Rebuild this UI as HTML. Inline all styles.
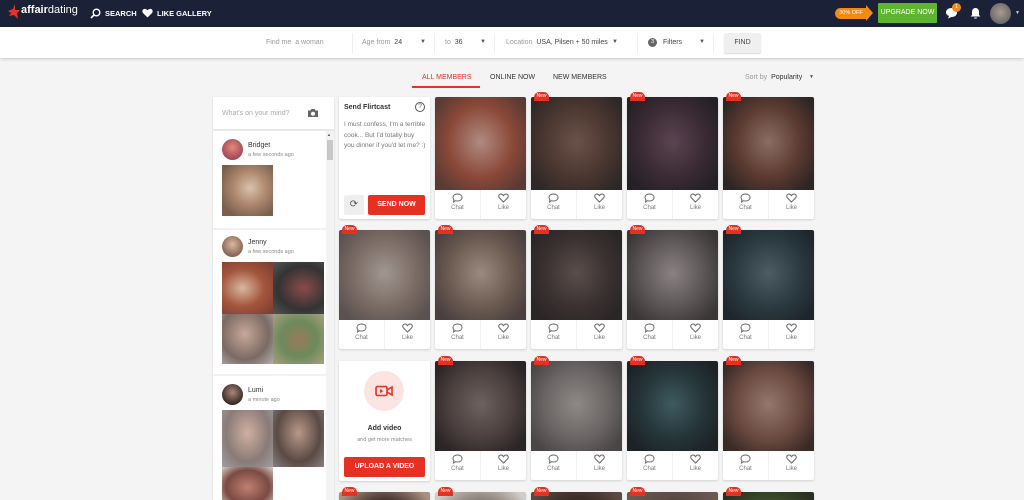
<!DOCTYPE html>
<html style="width:1024px;height:500px;overflow:hidden"><head><meta charset="utf-8">
<style>
*{box-sizing:border-box;margin:0;padding:0}
body{width:1024px;height:500px;overflow:hidden;background:#f4f4f4;font-family:"Liberation Sans",Arial,sans-serif;position:relative}
.abs{position:absolute}
.top{left:0;top:0;width:1024px;height:27px;background:#1b2136}
.nav{color:#fff;font-size:7.5px;font-weight:bold;top:9px}
.bar{left:0;top:27px;width:1024px;height:31px;background:#fff;box-shadow:0 1px 3px rgba(0,0,0,.18)}
.lbl{font-size:7px;color:#999;top:39px}
.lbl b{color:#444;font-weight:normal}
.caret{font-size:6px;color:#555;top:39px}
.sep{top:33px;width:1px;height:20px;background:#eee}
.card{background:#fff;border-radius:2px;box-shadow:0 1px 2px rgba(0,0,0,.15);overflow:hidden;width:91px}
.ph{position:absolute;left:0;top:0;width:91px}
.act{position:absolute;left:0;width:91px;height:29px;display:flex}
.act div{flex:1;text-align:center;font-size:6px;color:#777;padding-top:3px;border-right:1px solid #f0f0f0}
.act div:last-child{border:0}
.act svg{display:block;margin:0 auto 2px}
.new{width:15px;height:9px;border-radius:5px 5px 0 0;background:#e63022;color:#fff;font-size:5px;text-align:center;line-height:8px}
.red{background:#e63022;color:#fff;font-weight:bold;text-align:center;border-radius:2px}
.tab{top:74px;font-size:7px;color:#333}
</style></head><body>
<div class="abs top"></div>
<svg class="abs" style="left:5px;top:3px" width="18" height="18" viewBox="0 0 18 18"><path d="M10 1 L8 6 L3 8 L6 10 L4 13 L9 12 L13 16 L12 10 L15 7 L10 7 Z" fill="#e53424"/></svg>
<div class="abs" style="left:21px;top:4px;color:#fff;font-size:11px"><b>affair</b>dating</div>
<svg class="abs" style="left:90px;top:8px" width="11" height="11" viewBox="0 0 11 11"><circle cx="6.5" cy="4.5" r="3.3" fill="none" stroke="#fff" stroke-width="1.4"/><path d="M4 7 L1 10" stroke="#fff" stroke-width="1.6"/></svg>
<div class="abs nav" style="left:105px">SEARCH</div>
<svg class="abs" style="left:142px;top:8px" width="11" height="10" viewBox="0 0 11 10"><path d="M5.5 9.5 L1 5 C-1 2.5 2 -1 5.5 2.2 C9 -1 12 2.5 10 5 Z" fill="#fff"/></svg>
<div class="abs nav" style="left:157px">LIKE GALLERY</div>
<div class="abs" style="left:835px;top:8px;width:32px;height:11px;background:#f28a14;border-radius:6px 0 0 6px;color:#fff;font-size:5.5px;line-height:11px;text-align:center">30% OFF</div>
<div class="abs" style="left:866px;top:5px;width:0;height:0;border-top:8px solid transparent;border-bottom:8px solid transparent;border-left:7px solid #f28a14"></div>
<div class="abs" style="left:878px;top:3px;width:59px;height:20px;background:#5db530;color:#fff;font-size:7px;line-height:20px;text-align:center;border-radius:1px">UPGRADE NOW</div>
<svg class="abs" style="left:945px;top:7px" width="13" height="12" viewBox="0 0 13 12"><path d="M6.5 1 C10 1 12 3 12 5.5 C12 8 10 10 6.5 10 L3 11.5 L4 9 C2 8 1 7 1 5.5 C1 3 3 1 6.5 1Z" fill="#fff"/></svg>
<div class="abs" style="left:952px;top:3px;width:9px;height:9px;border-radius:50%;background:#f28a14;color:#fff;font-size:5px;text-align:center;line-height:9px">1</div>
<svg class="abs" style="left:970px;top:7px" width="11" height="12" viewBox="0 0 11 12"><path d="M5.5 1 C8 1 9 3 9 5 L9 8 L10.5 9.5 L0.5 9.5 L2 8 L2 5 C2 3 3 1 5.5 1Z M4 10.5 L7 10.5 C7 12 4 12 4 10.5Z" fill="#fff"/></svg>
<div class="abs" style="left:990px;top:3px;width:21px;height:21px;border-radius:50%;background:radial-gradient(circle at 50% 45%,#a89c94,#6e6a6a 70%)"></div>
<div class="abs" style="left:1015px;top:10px;color:#ccc;font-size:5px">▼</div>

<div class="abs bar"></div>
<div class="abs lbl" style="left:266px">Find me &nbsp;<span style="color:#999">a woman</span></div>
<div class="abs sep" style="left:352px"></div>
<div class="abs lbl" style="left:362px">Age from &nbsp;<b>24</b></div>
<div class="abs caret" style="left:420px">▼</div>
<div class="abs sep" style="left:434px"></div>
<div class="abs lbl" style="left:445px">to &nbsp;<b>36</b></div>
<div class="abs caret" style="left:480px">▼</div>
<div class="abs sep" style="left:494px"></div>
<div class="abs lbl" style="left:506px">Location &nbsp;<b>USA, Pilsen + 50 miles</b></div>
<div class="abs caret" style="left:612px">▼</div>
<div class="abs sep" style="left:637px"></div>
<div class="abs" style="left:648px;top:38px;width:9px;height:9px;border-radius:50%;background:#666;color:#fff;font-size:5.5px;text-align:center;line-height:9px">3</div>
<div class="abs lbl" style="left:663px"><b>Filters</b></div>
<div class="abs caret" style="left:699px">▼</div>
<div class="abs sep" style="left:713px"></div>
<div class="abs" style="left:724px;top:33px;width:37px;height:20px;background:#efefef;border-radius:2px;box-shadow:0 1px 1px rgba(0,0,0,.15);font-size:7px;color:#444;text-align:center;line-height:20px">FIND</div>

<div class="abs tab" style="left:422px;color:#e63022">ALL MEMBERS</div>
<div class="abs" style="left:412px;top:86px;width:68px;height:2px;background:#e63022"></div>
<div class="abs tab" style="left:490px">ONLINE NOW</div>
<div class="abs tab" style="left:553px">NEW MEMBERS</div>
<div class="abs" style="left:745px;top:74px;font-size:7px;color:#999">Sort by &nbsp;<span style="color:#333">Popularity</span></div>
<div class="abs" style="left:809px;top:74px;font-size:5px;color:#555">▼</div>

<div class="abs" style="left:213px;top:97px;width:121px;height:410px;background:#fff;box-shadow:0 1px 2px rgba(0,0,0,.12)"></div>
<div class="abs" style="left:222px;top:110px;font-size:7px;color:#aaa">What's on your mind?</div>
<svg class="abs" style="left:307px;top:108px" width="12" height="10" viewBox="0 0 12 10"><path d="M1 2.5 L3.5 2.5 L4.5 1 L7.5 1 L8.5 2.5 L11 2.5 L11 9 L1 9Z" fill="#666"/><circle cx="6" cy="5.7" r="2" fill="#fff"/></svg>
<div class="abs" style="left:213px;top:129px;width:121px;height:2px;background:#e8e8e8"></div>
<div class="abs" style="left:326px;top:131px;width:8px;height:370px;background:#f3f3f3"></div>
<div class="abs" style="left:327px;top:140px;width:6px;height:20px;background:#c8c8c8"></div>
<div class="abs" style="left:327px;top:132px;font-size:4px;color:#555">▲</div>

<div class="abs" style="left:222px;top:139px;width:21px;height:21px;border-radius:50%;background:radial-gradient(circle at 50% 40%,#e28a7a,#a6475a 70%)"></div>
<div class="abs" style="left:248px;top:142px;font-size:7px;color:#333">Bridget</div>
<div class="abs" style="left:248px;top:152px;font-size:5.5px;color:#888">a few seconds ago</div>
<div class="abs" style="left:222px;top:165px;width:51px;height:51px;background:radial-gradient(ellipse at 55% 45%,#d9c2ae 0%,#b08a70 40%,#7a5f4e 80%)"></div>
<div class="abs" style="left:213px;top:228px;width:113px;height:2px;background:#f2f2f2"></div>

<div class="abs" style="left:222px;top:236px;width:21px;height:21px;border-radius:50%;background:radial-gradient(circle at 50% 40%,#d8b8a0,#8a6656 70%)"></div>
<div class="abs" style="left:248px;top:239px;font-size:7px;color:#333">Jenny</div>
<div class="abs" style="left:248px;top:249px;font-size:5.5px;color:#888">a few seconds ago</div>
<div class="abs" style="left:222px;top:262px;width:51px;height:52px;background:radial-gradient(ellipse at 40% 50%,#d8b8a0,#a4563e 50%,#7a3a2e)"></div>
<div class="abs" style="left:273px;top:262px;width:51px;height:52px;background:radial-gradient(ellipse at 60% 50%,#8a4a4a,#333 60%,#555)"></div>
<div class="abs" style="left:222px;top:314px;width:51px;height:50px;background:radial-gradient(ellipse at 45% 40%,#c7a898,#7b6a64 60%,#b0b0b0)"></div>
<div class="abs" style="left:273px;top:314px;width:51px;height:50px;background:radial-gradient(ellipse at 50% 50%,#9a7a5a,#6c8a5a 50%,#a8a080)"></div>
<div class="abs" style="left:213px;top:374px;width:113px;height:2px;background:#f2f2f2"></div>

<div class="abs" style="left:222px;top:384px;width:21px;height:21px;border-radius:50%;background:radial-gradient(circle at 50% 40%,#a88878,#3a2a26 70%)"></div>
<div class="abs" style="left:248px;top:387px;font-size:7px;color:#333">Lumi</div>
<div class="abs" style="left:248px;top:397px;font-size:5.5px;color:#888">a minute ago</div>
<div class="abs" style="left:222px;top:410px;width:51px;height:57px;background:radial-gradient(ellipse at 50% 40%,#d0b0a0,#8a7a78 60%,#a0a0a0)"></div>
<div class="abs" style="left:273px;top:410px;width:51px;height:57px;background:radial-gradient(ellipse at 50% 40%,#b89888,#5a4a44 60%,#8a8080)"></div>
<div class="abs" style="left:222px;top:467px;width:51px;height:40px;background:radial-gradient(ellipse at 50% 50%,#c08070,#7a4a44 60%,#d8d0c0)"></div>

<div class="abs card" style="left:339px;top:97px;height:122px">
<div class="abs" style="left:5px;top:7px;font-size:7px;font-weight:bold;color:#333">Send Flirtcast</div>
<div class="abs" style="left:76px;top:5px;width:10px;height:10px;border:1px solid #555;border-radius:50%;font-size:6.5px;text-align:center;line-height:8px;color:#555">?</div>
<div class="abs" style="left:5px;top:23px;width:82px;font-size:6.5px;color:#777;line-height:10.5px">I must confess, I'm a terrible cook... But I'd totally buy you dinner if you'd let me? :)</div>
<div class="abs" style="left:5px;top:98px;width:20px;height:20px;background:#eee;border-radius:2px;text-align:center;line-height:20px;font-size:10px;color:#555">⟳</div>
<div class="abs red" style="left:29px;top:98px;width:57px;height:20px;font-size:7px;line-height:20px">SEND NOW</div>
</div>

<div class="abs card" style="left:339px;top:361px;height:120px">
<div class="abs" style="left:25px;top:10px;width:40px;height:40px;border-radius:50%;background:#fbe4e2"></div>
<svg class="abs" style="left:36px;top:24px" width="18" height="12" viewBox="0 0 18 12"><rect x="1" y="1.5" width="11" height="9" rx="1.5" fill="none" stroke="#e63022" stroke-width="1.6"/><path d="M5 4 L8.5 6 L5 8Z" fill="#e63022"/><path d="M12 5 L17 2 L17 10 L12 7" fill="none" stroke="#e63022" stroke-width="1.6"/></svg>
<div class="abs" style="left:0;top:64px;width:91px;text-align:center;font-size:7px;font-weight:bold;color:#333">Add video</div>
<div class="abs" style="left:0;top:76px;width:91px;text-align:center;font-size:5.5px;color:#888">and get more matches</div>
<div class="abs red" style="left:5px;top:96px;width:81px;height:20px;font-size:7px;line-height:20px">UPLOAD A VIDEO</div>
</div>

<div id="grid"></div>
<script>
var cols=[339,435,531,627,723];
var rows=[[97,93],[230,90],[361,90],[492,90]];
var pal=[
[null,["#b08a80","#8a4838","#5a3a34"],["#6a5248","#4a3630","#2e2828"],["#5a4450","#3a2a34","#242026"],["#8a6e62","#5a3a30","#2e2624"]],
[["#a09890","#7a6a64","#5a5250"],["#9a8a80","#6a5a50","#4a4040"],["#5a4e4c","#3a3030","#2a2626"],["#8a8282","#5a5454","#3a3636"],["#4e5c62","#2a3a40","#1e262c"]],
[null,["#6e6260","#4a3e3e","#2a2424"],["#8e8886","#6a6464","#4a4646"],["#3e5a60","#243438","#1c2226"],["#94786c","#6a4a40","#3a2a26"]],
[["#7a5e52","#4a3430","#a89080"],["#b0a8a0","#8a8078","#d0ccc8"],["#7a5e52","#3a2a26","#5a4a40"],["#908070","#5a4a44","#6a5a50"],["#5a6a4e","#3a4a2a","#2a3020"]]
];
var chat='<svg width="11" height="10" viewBox="0 0 11 10"><path d="M5.5 1 C8.3 1 10 2.5 10 4.5 C10 6.5 8.3 8 5.5 8 C4.8 8 4.2 7.9 3.6 7.7 L1.5 9 L2 6.8 C1.3 6.2 1 5.4 1 4.5 C1 2.5 2.7 1 5.5 1Z" fill="none" stroke="#666" stroke-width="1"/></svg>';
var like='<svg width="11" height="10" viewBox="0 0 11 10"><path d="M5.5 9 L1.5 5 C0 3.5 0.8 1 3 1 C4.2 1 5 1.8 5.5 2.6 C6 1.8 6.8 1 8 1 C10.2 1 11 3.5 9.5 5 Z" fill="none" stroke="#666" stroke-width="1"/></svg>';
var h='';
rows.forEach(function(r,ri){cols.forEach(function(x,ci){var p=pal[ri][ci];if(!p)return;
var t=r[0],ih=r[1];
h+='<div class="abs card" style="left:'+x+'px;top:'+t+'px;height:'+(ih+29)+'px"><div class="ph" style="height:'+ih+'px;background:radial-gradient(ellipse 60% 65% at 50% 48%,'+p[0]+' 0%,'+p[1]+' 60%,'+p[2]+' 100%)"></div><div class="act" style="top:'+ih+'px"><div>'+chat+'Chat</div><div>'+like+'Like</div></div></div>';
if(!(ri==0&&ci==1))h+='<div class="abs new" style="left:'+(x+3)+'px;top:'+(t-5)+'px">New</div>';
});});
document.getElementById('grid').innerHTML=h;
</script>
</body></html>
